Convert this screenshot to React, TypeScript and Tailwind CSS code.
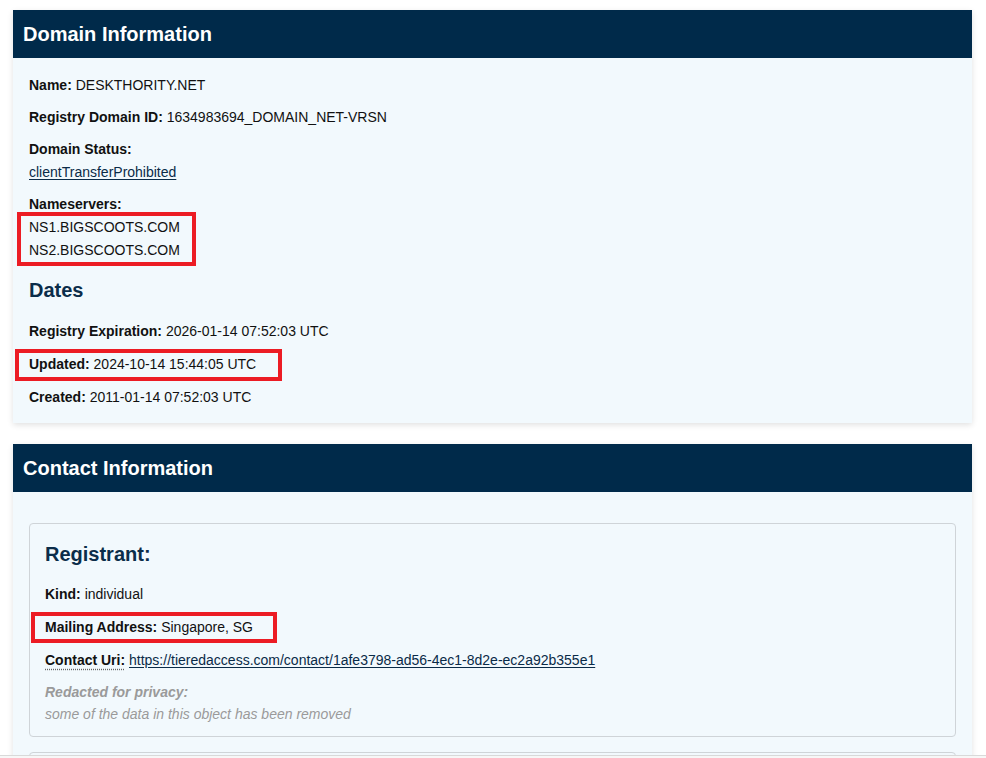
import React from "react";

const Row = ({ label, value, className = "" }: { label: string; value: React.ReactNode; className?: string }) => (
  <div className={"leading-[23px] " + className}>
    <span className="font-bold">{label}</span> {value}
  </div>
);

export default function App() {
  return (
    <div className="relative min-h-screen bg-white font-['Liberation_Sans',Arial,sans-serif] text-[14px] text-[#111111]">
      <div className="flex flex-col gap-[21px] pt-[10px] pl-[13px] pr-[14px]">
        {/* Domain Information */}
        <section className="shadow-[0_2px_6px_rgba(0,0,0,0.12)]">
          <div className="flex h-[48px] items-center bg-[#002a4a] px-[10px] text-[20px] font-bold text-white">
            Domain Information
          </div>
          <div className="bg-[#f2f9fd] px-4 pt-4 pb-[14px]">
            <Row label="Name:" value="DESKTHORITY.NET" className="mb-[9px]" />
            <Row label="Registry Domain ID:" value="1634983694_DOMAIN_NET-VRSN" className="mb-[9px]" />
            <div className="mb-[9px] leading-[23px]">
              <div className="font-bold">Domain Status:</div>
              <div>
                <a className="text-[#0a2b48] underline underline-offset-2" href="#">
                  clientTransferProhibited
                </a>
              </div>
            </div>
            <div className="leading-[23px]">
              <div className="font-bold">Nameservers:</div>
              <div>NS1.BIGSCOOTS.COM</div>
              <div>NS2.BIGSCOOTS.COM</div>
            </div>
            <h3 className="mt-4 mb-[18px] text-[20px] font-bold leading-[24px] text-[#0b2d4a]">Dates</h3>
            <Row label="Registry Expiration:" value="2026-01-14 07:52:03 UTC" className="mb-[10px]" />
            <Row label="Updated:" value="2024-10-14 15:44:05 UTC" className="mb-[10px]" />
            <Row label="Created:" value="2011-01-14 07:52:03 UTC" />
          </div>
        </section>

        {/* Contact Information */}
        <section className="shadow-[0_2px_6px_rgba(0,0,0,0.12)]">
          <div className="flex h-[48px] items-center bg-[#002a4a] px-[10px] text-[20px] font-bold text-white">
            Contact Information
          </div>
          <div className="flex flex-col gap-[15px] bg-[#f2f9fd] px-4 pt-[31px] pb-4">
            <div className="rounded-[4px] border border-[#cfd4d8] px-[15px] pt-4 pb-[11px]">
              <h3 className="mb-[15px] text-[20px] font-bold leading-[28px] text-[#0b2d4a]">Registrant:</h3>
              <Row label="Kind:" value="individual" className="mb-[10px]" />
              <Row label="Mailing Address:" value="Singapore, SG" className="mb-[10px]" />
              <div className="mb-[9px] leading-[23px]">
                <span className="font-bold underline decoration-dotted decoration-[#666] underline-offset-[4px]">
                  Contact Uri:
                </span>{" "}
                <a className="text-[#0a2b48] underline underline-offset-2" href="#">
                  https://tieredaccess.com/contact/1afe3798-ad56-4ec1-8d2e-ec2a92b355e1
                </a>
              </div>
              <div className="italic leading-[22px] text-[#9a9a9a]">
                <div className="font-bold">Redacted for privacy:</div>
                <div>some of the data in this object has been removed</div>
              </div>
            </div>
            <div className="h-[80px] rounded-[4px] border border-[#cfd4d8]" />
          </div>
        </section>
      </div>

      {/* Annotation boxes */}
      <div className="pointer-events-none absolute left-[17px] top-[212px] h-[54px] w-[179px] border-[4px] border-[#ec1c24]" />
      <div className="pointer-events-none absolute left-[15px] top-[349px] h-[32px] w-[267px] border-[4px] border-[#ec1c24]" />
      <div className="pointer-events-none absolute left-[31px] top-[612px] h-[31px] w-[246px] border-[4px] border-[#ec1c24]" />

      {/* bottom strip */}
      <div className="pointer-events-none fixed bottom-0 left-0 right-0 h-[3px] border-t border-[#d9d9d9] bg-[#f7f7f7]" />
    </div>
  );
}
